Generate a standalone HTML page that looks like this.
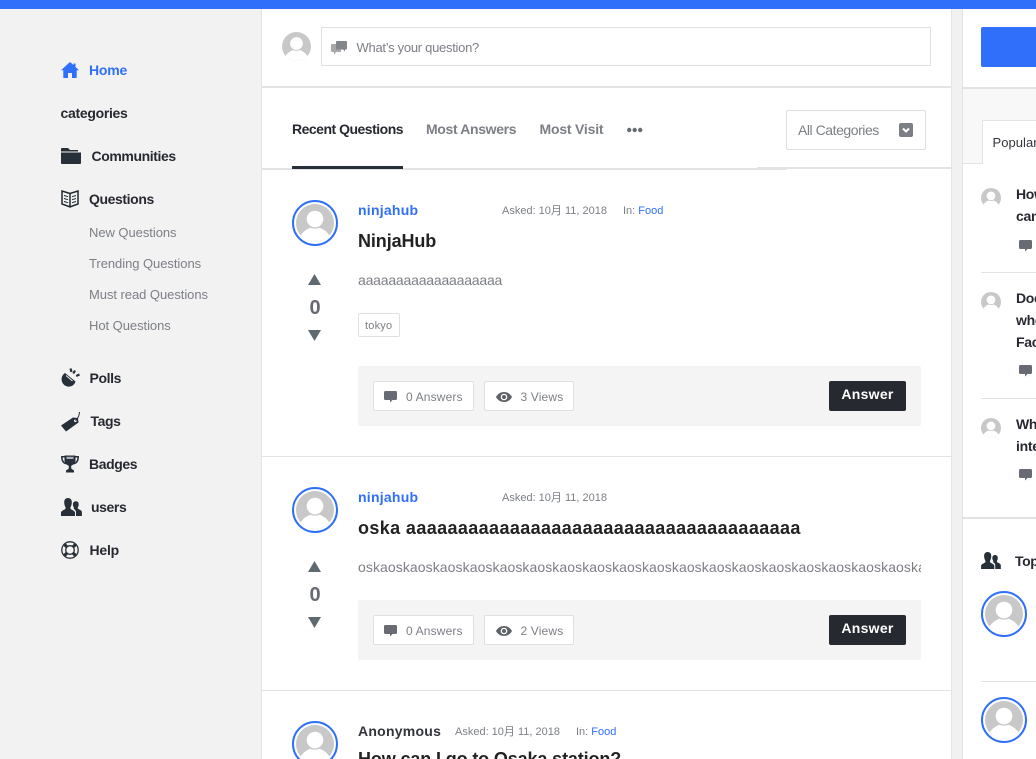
<!DOCTYPE html>
<html><head><meta charset="utf-8">
<style>
html,body{margin:0;padding:0;width:1036px;height:759px;overflow:hidden;background:#fff}
body{position:relative;font-family:"Liberation Sans","Noto Sans CJK SC",sans-serif;color:#272930}
.a{position:absolute}
.t{position:absolute;white-space:nowrap;line-height:20px;height:20px}
.nav{font-size:14px;font-weight:bold;color:#272930;letter-spacing:-.4px}
.sub{font-size:13px;color:#7c7f85;letter-spacing:-.05px}
.meta{font-size:11px;color:#7c7f85}
.blue{color:#2f6ffa}
.name{font-size:14px;font-weight:bold;letter-spacing:.25px}
.title{font-size:18px;font-weight:bold;color:#222}
.box{position:absolute;background:#fff;border:1px solid #e0e0e0;border-radius:2px;box-sizing:border-box}
.bar{position:absolute;background:#f4f4f4;border-radius:2px}
.btn{position:absolute;background:#272930;border-radius:2px;color:#fff;font-weight:bold;font-size:14px;letter-spacing:.3px;text-align:center;line-height:27px;width:77px;height:30px}
.c{font-size:12px;color:#7c7f85;letter-spacing:.15px}
.hr{position:absolute;background:#e3e3e3;height:1px}
.av{position:absolute}
.sb{font-size:14px;font-weight:bold;color:#272930;line-height:22px;height:22px;letter-spacing:-.3px}
svg{position:absolute;overflow:hidden}
</style></head><body>
<svg width="0" height="0" style="position:absolute"><defs>
<clipPath id="cp"><circle cx="24" cy="24" r="24"/></clipPath>
<symbol id="u" viewBox="0 0 48 48"><circle cx="24" cy="24" r="24" fill="#c8c8c8"/><g clip-path="url(#cp)" fill="#fff"><circle cx="24" cy="19" r="10.500"/><path d="M3 48l2-6c2-6 8-10 13-12 3 1.500 9 1.500 12 0 5 2 11 6 13 12l2 6z"/></g></symbol>
<symbol id="ring" viewBox="0 0 46 46"><circle cx="23" cy="23" r="22" fill="#fff" stroke="#2f6ffa" stroke-width="2"/><svg x="4" y="4" width="38" height="38" viewBox="0 0 48 48"><use href="#u" width="48" height="48"/></svg></symbol>
<symbol id="cm" viewBox="0 0 13 12"><path d="M1.500 0h10A1.500 1.500 0 0 1 13 1.500v6A1.500 1.500 0 0 1 11.500 9H8.500L6 11.500V9H1.500A1.500 1.500 0 0 1 0 7.500v-6A1.500 1.500 0 0 1 1.500 0z" fill="#686b73"/></symbol>
<symbol id="ey" viewBox="0 0 16 10"><path d="M8 0C4.500 0 1.500 2 0 5c1.500 3 4.500 5 8 5s6.500-2 8-5C14.500 2 11.500 0 8 0z" fill="#5f6368"/><circle cx="8" cy="5" r="3.300" fill="#fff"/><circle cx="8" cy="5" r="2" fill="#5f6368"/></symbol>
<symbol id="us" viewBox="0 0 21 18"><path d="M0 18v-3.500c0-1.500 3-2.500 4.300-3.500.5-.7.400-1.500-.2-2.500C3.400 7 3.200 5.500 3.200 4 3.200 1.500 4.800 0 7 0s3.800 1.500 3.800 4c0 1.500-.2 3-.9 4.500-.6 1-.7 1.800-.2 2.500 1.300 1 4.300 2 4.300 3.500V18z" fill="#272f38"/><path d="M15 18v-4c0-1.500-1-2.300-2.300-3.300.3-.5.300-1 0-1.500-.6-1-.8-2-.8-3 0-1.800 1.200-3 2.900-3s2.900 1.200 2.900 3c0 1-.2 2-.8 3-.3.700-.2 1.200.3 1.700 1.300.8 3.700 1.500 3.700 3.300V18z" fill="#272f38"/></symbol>
</defs></svg>

<!-- layout -->
<div class="a" style="left:0;top:0;width:261px;height:759px;background:#f2f2f2"></div>
<div class="a" style="left:261px;top:0;width:1px;height:759px;background:#e3e3e3"></div>
<div class="a" style="left:951px;top:0;width:11px;height:759px;background:#f1f1f1;border-left:1px solid #e6e6e6;box-sizing:border-box"></div>
<div class="a" style="left:962px;top:0;width:1px;height:759px;background:#e3e3e3"></div>
<div class="a" style="left:0;top:0;width:1036px;height:9px;background:#2f6ffa"></div>

<!-- sidebar -->
<svg style="left:61px;top:62px" width="18" height="16" viewBox="0 0 18 16"><path d="M9 0l3.500 3V1.500h2V5L18 8.300h-2.300V16H11v-5H7v5H2.300V8.300H0z" fill="#2f6ffa"/></svg>
<div class="t nav blue" style="left:89px;top:60px;letter-spacing:-.2px">Home</div>
<div class="t nav" style="left:60.500px;top:103px;letter-spacing:-.3px">categories</div>
<svg style="left:61px;top:148px" width="20" height="16" viewBox="0 0 20 16"><path d="M1 0h6l2 2h8v1.500H0V1a1 1 0 0 1 1-1zM0 4.500h20V15a1 1 0 0 1-1 1H1a1 1 0 0 1-1-1z" fill="#272f38"/></svg>
<div class="t nav" style="left:91.500px;top:146px">Communities</div>
<svg style="left:61px;top:190px" width="18" height="18" viewBox="0 0 18 18" fill="none" stroke="#1f2730" stroke-width="1.500"><path d="M9 3.500L1 1v13l8 3 8-3V1zM9 3.500V17"/><path d="M3 5.500l4 1.200M3 8.500l4 1.200M3 11.500l4 1.200M15 5.500l-4 1.200M15 8.500l-4 1.200M15 11.500l-4 1.200" stroke-width="1"/></svg>
<div class="t nav" style="left:89px;top:189px">Questions</div>
<div class="t sub" style="left:89px;top:223px">New Questions</div>
<div class="t sub" style="left:89px;top:254px">Trending Questions</div>
<div class="t sub" style="left:89px;top:285px">Must read Questions</div>
<div class="t sub" style="left:89px;top:316px">Hot Questions</div>

<svg style="left:61px;top:368px" width="19" height="20" viewBox="0 0 19 20"><path d="M4 5L14.500 13.500C13.500 17 10 19.300 6.500 18.500 2.500 17.700 0 14 .7 10 1 8 2.500 6 4 5z" fill="#272f38"/><path d="M9.500 .5l1 3.500M14 2.500l-1.700 3M18.500 6.500l-3.300 1.500" stroke="#272f38" stroke-width="2.200" fill="none"/><path d="M5 7.500l6.500 5.500" stroke="#f2f2f2" stroke-width="1"/></svg>
<div class="t nav" style="left:89.500px;top:368px">Polls</div>
<svg style="left:61px;top:411px" width="20" height="21" viewBox="0 0 20 21"><path d="M0 14.500L12 6.500l5 .5.500 4.500L5 20.500z" fill="#272f38"/><circle cx="14.300" cy="9.800" r="1.300" fill="#f2f2f2"/><path d="M14.500 9.500c2.500-2 3.800-4.800 4-8.500" fill="none" stroke="#272f38" stroke-width="1"/></svg>
<div class="t nav" style="left:90.500px;top:411px">Tags</div>
<svg style="left:61px;top:455px" width="18" height="18" viewBox="0 0 18 18"><path d="M3.500 .5h11v5c0 2.800-2.300 4.500-4.300 5.200V13c0 1 1.500 1.500 2.800 2.500V17.500H5v-2c1.300-1 2.800-1.500 2.800-2.500v-2.300C5.800 10 3.500 8.300 3.500 5.500z" fill="#272f38"/><path d="M4 1.700H.8c0 3.800 1.500 6.300 4.500 7M14 1.700h3.200c0 3.800-1.500 6.300-4.500 7" fill="none" stroke="#272f38" stroke-width="1.500"/><path d="M5.500 1.800h7v2.200h-7z" fill="#aab0b5"/></svg>
<div class="t nav" style="left:89px;top:454px">Badges</div>
<svg style="left:61px;top:498px" width="21" height="18"><use href="#us" width="21" height="18"/></svg>
<div class="t nav" style="left:91px;top:497px">users</div>
<svg style="left:61px;top:541px" width="18" height="18" viewBox="0 0 18 18" fill="none" stroke="#272f38"><circle cx="9" cy="9" r="8.200" stroke-width="1.300"/><circle cx="9" cy="9" r="4.300" stroke-width="1.300"/><path d="M3.500 3.500l2.500 2.500M14.500 3.500L12 6M3.500 14.500L6 12M14.500 14.500L12 12" stroke-width="3.200"/></svg>
<div class="t nav" style="left:89.500px;top:540px;letter-spacing:-.2px">Help</div>

<!-- ask bar -->
<svg class="av" style="left:282px;top:32px" width="29" height="29"><use href="#u" width="29" height="29"/></svg>
<div class="box" style="left:321px;top:27px;width:610px;height:39px;border-radius:0"></div>
<svg style="left:331px;top:41px" width="16" height="14" viewBox="0 0 16 14"><path d="M0 4a1 1 0 0 1 1-1h9v8H5l-2 3v-3H1a1 1 0 0 1-1-1z" fill="#a6a8ac"/><path d="M5 1a1 1 0 0 1 1-1h9a1 1 0 0 1 1 1v6.500a1 1 0 0 1-1 1h-1v2l-2-2H5z" fill="#83868b"/></svg>
<div class="t" style="left:356.500px;top:38px;font-size:13px;color:#7c7f85;letter-spacing:-.28px">What’s your question?</div>
<div class="a" style="left:262px;top:86px;width:689px;height:2px;background:#e3e3e3"></div>

<!-- tabs -->
<div class="t nav" style="left:292px;top:119px;letter-spacing:-.5px">Recent Questions</div>
<div class="t nav" style="left:426px;top:119px;color:#7c7f85;letter-spacing:-.35px">Most Answers</div>
<div class="t nav" style="left:539.500px;top:119px;color:#7c7f85;letter-spacing:-.2px">Most Visit</div>
<svg style="left:626px;top:127px" width="18" height="6"><circle cx="3.200" cy="3" r="2.200" fill="#686b73"/><circle cx="8.700" cy="3" r="2.200" fill="#686b73"/><circle cx="14.200" cy="3" r="2.200" fill="#686b73"/></svg>
<div class="a" style="left:262px;top:168px;width:525px;height:2px;background:#e3e3e3"></div>
<div class="a" style="left:757px;top:167px;width:194px;height:2px;background:#e3e3e3"></div>
<div class="a" style="left:292px;top:166px;width:111px;height:3px;background:#272f38"></div>
<div class="box" style="left:786px;top:110px;width:140px;height:40px"></div>
<div class="t" style="left:798px;top:120px;font-size:14px;color:#7c7f85;letter-spacing:-.45px">All Categories</div>
<div class="a" style="left:899px;top:123px;width:14px;height:14px;background:#7c7f85;border-radius:2px"></div>
<svg style="left:899px;top:123px" width="14" height="14"><path d="M4 5.500l3 3 3-3" fill="none" stroke="#fff" stroke-width="2"/></svg>

<!-- question 1 -->
<svg class="av" style="left:292px;top:200px" width="46" height="46"><use href="#ring" width="46" height="46"/></svg>
<svg style="left:308px;top:274px" width="13" height="11"><path d="M6.500 0L13 11H0z" fill="#5f6a70"/></svg>
<div class="t" style="left:292px;top:298px;width:46px;text-align:center;font-size:20px;font-weight:bold;color:#686b73">0</div>
<svg style="left:308px;top:330px" width="13" height="11"><path d="M0 0h13L6.500 11z" fill="#5f6a70"/></svg>
<div class="t name blue" style="left:358px;top:200px">ninjahub</div>
<div class="t meta" style="left:502px;top:201px">Asked: 10月 11, 2018</div>
<div class="t meta" style="left:623px;top:201px">In: <span class="blue">Food</span></div>
<div class="t title" style="left:358px;top:231px;letter-spacing:-.1px">NinjaHub</div>
<div class="t" style="left:358px;top:270px;font-size:14px;color:#7c7f85;letter-spacing:-.2px">aaaaaaaaaaaaaaaaaaa</div>
<div class="box" style="left:358px;top:313px;width:42px;height:24px"></div>
<div class="t" style="left:365px;top:316px;font-size:11px;color:#7c7f85;letter-spacing:.2px">tokyo</div>
<div class="bar" style="left:358px;top:366px;width:563px;height:60px"></div>
<div class="box" style="left:373px;top:381px;width:101px;height:30px"></div>
<svg style="left:384px;top:391px" width="13" height="12"><use href="#cm" width="13" height="12"/></svg>
<div class="t c" style="left:406px;top:387px">0 Answers</div>
<div class="box" style="left:484px;top:381px;width:90px;height:30px"></div>
<svg style="left:496px;top:392px" width="16" height="10"><use href="#ey" width="16" height="10"/></svg>
<div class="t c" style="left:520.500px;top:387px">3 Views</div>
<div class="btn" style="left:829px;top:381px">Answer</div>
<div class="hr" style="left:262px;top:456px;width:689px"></div>

<!-- question 2 -->
<svg class="av" style="left:292px;top:487px" width="46" height="46"><use href="#ring" width="46" height="46"/></svg>
<svg style="left:308px;top:561px" width="13" height="11"><path d="M6.500 0L13 11H0z" fill="#5f6a70"/></svg>
<div class="t" style="left:292px;top:585px;width:46px;text-align:center;font-size:20px;font-weight:bold;color:#686b73">0</div>
<svg style="left:308px;top:617px" width="13" height="11"><path d="M0 0h13L6.500 11z" fill="#5f6a70"/></svg>
<div class="t name blue" style="left:358px;top:487px">ninjahub</div>
<div class="t meta" style="left:502px;top:488px">Asked: 10月 11, 2018</div>
<div class="t title" style="left:358px;top:518px;letter-spacing:.38px">oska aaaaaaaaaaaaaaaaaaaaaaaaaaaaaaaaaaaaaa</div>
<div class="t" style="left:358px;top:557px;width:563px;overflow:hidden;font-size:14px;color:#7c7f85;letter-spacing:.08px">oskaoskaoskaoskaoskaoskaoskaoskaoskaoskaoskaoskaoskaoskaoskaoskaoskaoskaoskaoskaoskaoska</div>
<div class="bar" style="left:358px;top:600px;width:563px;height:60px"></div>
<div class="box" style="left:373px;top:615px;width:101px;height:30px"></div>
<svg style="left:384px;top:625px" width="13" height="12"><use href="#cm" width="13" height="12"/></svg>
<div class="t c" style="left:406px;top:621px">0 Answers</div>
<div class="box" style="left:484px;top:615px;width:90px;height:30px"></div>
<svg style="left:496px;top:626px" width="16" height="10"><use href="#ey" width="16" height="10"/></svg>
<div class="t c" style="left:520.500px;top:621px">2 Views</div>
<div class="btn" style="left:829px;top:615px">Answer</div>
<div class="hr" style="left:262px;top:690px;width:689px"></div>

<!-- question 3 -->
<svg class="av" style="left:292px;top:721px" width="46" height="46"><use href="#ring" width="46" height="46"/></svg>
<div class="t name" style="left:358px;top:721px;color:#33353b">Anonymous</div>
<div class="t meta" style="left:455px;top:722px">Asked: 10月 11, 2018</div>
<div class="t meta" style="left:576px;top:722px">In: <span class="blue">Food</span></div>
<div class="t title" style="left:358px;top:749px;letter-spacing:-.13px">How can I go to Osaka station?</div>

<!-- right column -->
<div class="a" style="left:981px;top:27px;width:55px;height:40px;background:#2f6ffa;border-radius:2px 0 0 2px"></div>
<div class="a" style="left:963px;top:87px;width:73px;height:2px;background:#e3e3e3"></div>
<div class="a" style="left:963px;top:89px;width:73px;height:75px;background:#f8f8f8"></div>
<div class="a" style="left:963px;top:163px;width:19px;height:1px;background:#e3e3e3"></div>
<div class="a" style="left:982px;top:120px;width:54px;height:44px;background:#fff;border:1px solid #e3e3e3;border-right:0;border-bottom:0;box-sizing:border-box"></div>
<div class="t" style="left:992.500px;top:133px;font-size:13px;color:#33353b;letter-spacing:.05px">Popular</div>

<svg class="av" style="left:981px;top:188px" width="20" height="20"><use href="#u" width="20" height="20"/></svg>
<div class="t sb" style="left:1016px;top:183px">How</div>
<div class="t sb" style="left:1016px;top:205px">can</div>
<svg style="left:1019px;top:240px" width="13" height="12"><use href="#cm" width="13" height="12"/></svg>
<div class="hr" style="left:981px;top:272px;width:55px"></div>

<svg class="av" style="left:981px;top:292px" width="20" height="20"><use href="#u" width="20" height="20"/></svg>
<div class="t sb" style="left:1016px;top:287px">Does</div>
<div class="t sb" style="left:1016px;top:309px">when</div>
<div class="t sb" style="left:1016px;top:331px">Face</div>
<svg style="left:1019px;top:365px" width="13" height="12"><use href="#cm" width="13" height="12"/></svg>
<div class="hr" style="left:981px;top:398px;width:55px"></div>

<svg class="av" style="left:981px;top:418px" width="20" height="20"><use href="#u" width="20" height="20"/></svg>
<div class="t sb" style="left:1016px;top:413px">What</div>
<div class="t sb" style="left:1016px;top:435px">inte</div>
<svg style="left:1019px;top:469px" width="13" height="12"><use href="#cm" width="13" height="12"/></svg>
<div class="a" style="left:963px;top:517px;width:73px;height:2px;background:#e3e3e3"></div>

<svg style="left:981px;top:552px" width="20" height="17"><use href="#us" width="20" height="17"/></svg>
<div class="t nav" style="left:1015px;top:551px">Top</div>
<svg class="av" style="left:981px;top:591px" width="46" height="46"><use href="#ring" width="46" height="46"/></svg>
<div class="hr" style="left:981px;top:681px;width:55px"></div>
<svg class="av" style="left:981px;top:697px" width="46" height="46"><use href="#ring" width="46" height="46"/></svg>
</body></html>
